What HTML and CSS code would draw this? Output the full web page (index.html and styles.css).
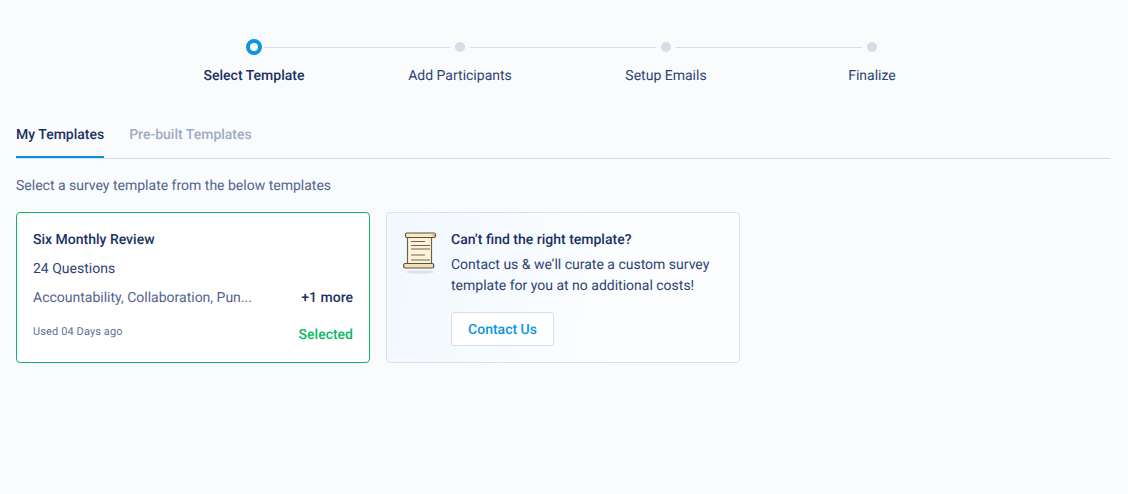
FILE: index.html
```html
<!DOCTYPE html>
<html lang="en">
<head>
<meta charset="utf-8">
<title>Select Template</title>
<link rel="stylesheet" href="styles.css">
</head>
<body>
<main class="page">
  <ol class="stepper">
    <li class="step step-active"><span class="track"><span class="dot"></span></span><span class="step-label">Select Template</span></li>
    <li class="step"><span class="track"><span class="dot"></span></span><span class="step-label">Add Participants</span></li>
    <li class="step"><span class="track"><span class="dot"></span></span><span class="step-label">Setup Emails</span></li>
    <li class="step"><span class="track"><span class="dot"></span></span><span class="step-label">Finalize</span></li>
  </ol>
  <nav class="tabs">
    <a class="tab tab-active">My Templates</a>
    <a class="tab">Pre-built Templates</a>
  </nav>
  <p class="hint">Select a survey template from the below templates</p>
  <section class="cards">
    <article class="card card-selected">
      <h3 class="card-title">Six Monthly Review</h3>
      <p class="card-count">24 Questions</p>
      <div class="card-row">
        <span class="card-tags">Accountability, Collaboration, Pun...</span>
        <span class="card-more">+1 more</span>
      </div>
      <div class="card-foot">
        <span class="card-used">Used 04 Days ago</span>
        <span class="card-status">Selected</span>
      </div>
    </article>
    <article class="card card-help">
      <svg class="scroll" width="34" height="42" viewBox="0 0 34 42" aria-hidden="true">
        <ellipse cx="17" cy="40" rx="14" ry="1.800" fill="#dfe3e8"/>
        <rect x="4.500" y="2" width="24" height="31" fill="#fdf2d6" stroke="#6b6557" stroke-width="1.200"/>
        <rect x="2.500" y="1" width="30" height="4.500" rx="1.500" fill="#fbe9c2" stroke="#55524a" stroke-width="1.200"/>
        <rect x="29.500" y="1.500" width="2.500" height="3" fill="#eeb45c"/>
        <rect x="0.700" y="31.500" width="30" height="4.500" rx="1.500" fill="#f5deb0" stroke="#55524a" stroke-width="1.200"/>
        <path d="M8 9.500h14M8 13.500h19M8 17h19M8 23h14M8 28h19" stroke="#6d675a" stroke-width="1" fill="none"/>
      </svg>
      <div class="help-body">
        <h3 class="help-title">Can’t find the right template?</h3>
        <p class="help-text">Contact us &amp; we’ll curate a custom survey template for you at no additional costs!</p>
        <button class="help-button" type="button">Contact Us</button>
      </div>
    </article>
  </section>
</main>
</body>
</html>
```
FILE: styles.css
```css
* { box-sizing: border-box; }
html, body { margin: 0; height: 100%; }
body {
  background: #fafbfd;
  color: #1b3163;
  font-family: Roboto, "Liberation Sans", sans-serif;
  font-size: 14px;
  line-height: 20px;
  text-rendering: geometricPrecision;
  overflow: hidden;
}
p, h3 { margin: 0; }
.page { padding: 38px 18px 0 16px; }

.stepper {
  list-style: none;
  margin: 0 auto;
  padding: 0;
  width: 824px;
  display: flex;
}
.step { flex: 1 1 0; display: flex; flex-direction: column; align-items: center; }
.track {
  position: relative;
  align-self: stretch;
  height: 18px;
  display: flex;
  justify-content: center;
  align-items: center;
}
.step:not(:last-child) .track::after {
  content: "";
  position: absolute;
  left: calc(50% + 10px);
  right: calc(-50% + 10px);
  top: 9px;
  height: 1px;
  background: #d9dce6;
}
.dot { width: 10px; height: 10px; border-radius: 50%; background: #d9dce8; margin-bottom: 1px; }
.step-active .dot { width: 16px; height: 16px; background: #fff; border: 4px solid #0a96e0; margin-bottom: 0; }
.step-label { margin-top: 10px; color: #2d4373; }
.step-active .step-label { color: #1b3163; font-weight: 500; }

.tabs {
  margin-top: 31px;
  height: 42px;
  display: flex;
  gap: 25px;
  border-bottom: 1px solid #dadde6;
}
.tab { height: 41px; padding-top: 8px; font-weight: 500; color: #9fabc4; }
.tab-active { color: #1b3163; border-bottom: 2px solid #0a8ee0; }

.hint { margin-top: 17px; color: #52648f; }

.cards { margin-top: 16px; display: flex; gap: 16px; }
.card { width: 354px; height: 151px; border-radius: 4px; background: #fff; }
.card-selected { border: 1px solid #0bb866; padding: 17px 16px 16px; }
.card-title { font-size: 14px; line-height: 20px; font-weight: 500; color: #1b3163; }
.card-count { margin-top: 9px; color: #2d4373; }
.card-row { margin-top: 9px; display: flex; justify-content: space-between; }
.card-tags { color: #52648f; }
.card-more { font-weight: 500; color: #1b3163; }
.card-foot { margin-top: 15px; display: flex; justify-content: space-between; align-items: flex-start; }
.card-used { font-size: 11px; letter-spacing: 0.01em; line-height: 18px; color: #5f7096; }
.card-status { margin-top: 2px; font-weight: 500; color: #0bb866; }

.card-help {
  display: flex;
  border: 1px solid #dde1ea;
  background: linear-gradient(100deg, #f1f8fe 0%, #fbfdff 60%, #fdfeff 100%);
  padding: 17px 16px 16px;
  gap: 14px;
}
.scroll { flex: none; margin-top: 2px; }
.help-body { flex: 1; }
.help-title { font-size: 14px; line-height: 20px; font-weight: 500; color: #1b3163; }
.help-text { margin-top: 5px; line-height: 21px; color: #2d4373; }
.help-button {
  margin-top: 15px;
  width: 103px;
  height: 34px;
  padding: 2px 0 0;
  border: 1px solid #d9dde7;
  border-radius: 3px;
  background: #fff;
  color: #0a96e0;
  font-family: inherit;
  font-size: 14px;
  font-weight: 500;
  text-rendering: inherit;
}
```
